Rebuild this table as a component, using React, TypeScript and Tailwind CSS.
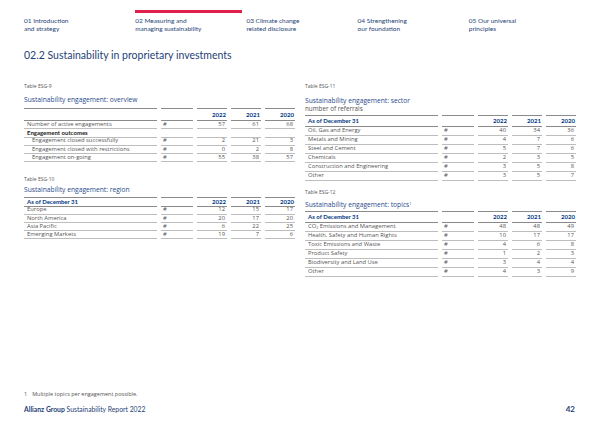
import React from 'react';

type Row = { label: React.ReactNode; indent?: boolean; bold?: boolean; vals?: string[] };

const grid = 'grid grid-cols-[133px_32px_30px_30px_30px] gap-x-[4px]';
const open = "font-['Open_Sans','Lato',sans-serif]";
const boldTxt = "font-['Lato','Open_Sans',sans-serif] font-bold text-[6px]";

function DataTable({
  head,
  headH,
  rowH,
  rows,
}: {
  head?: string;
  headH: string;
  rowH: string;
  rows: Row[];
}) {
  const hcell = `border-t border-b border-[#8a8a8a] ${headH} flex items-center ${boldTxt} text-[#003781]`;
  return (
    <div className="leading-none">
      <div className={grid}>
        <div className={`${hcell} pl-[3px]`}>{head}</div>
        <div className={hcell}></div>
        {['2022', '2021', '2020'].map(y => (
          <div key={y} className={`${hcell} justify-end pr-[1px]`}>{y}</div>
        ))}
      </div>
      {rows.map((r, i) => {
        const cell = `border-b border-[#bdbdbd] ${rowH} flex items-center text-[#555] ${open} text-[5.8px]`;
        return (
          <div key={i} className={grid}>
            <div className={`${cell} whitespace-nowrap ${r.indent ? 'pl-[8px]' : 'pl-[3px]'}`}>
              {r.bold ? <span className={`${boldTxt} text-[#222]`}>{r.label}</span> : r.label}
            </div>
            <div className={`${cell} pl-[2px]`}>{r.vals ? '#' : ''}</div>
            {[0, 1, 2].map(k => (
              <div key={k} className={`${cell} justify-end pr-[2px]`}>{r.vals ? r.vals[k] : ''}</div>
            ))}
          </div>
        );
      })}
    </div>
  );
}

const navItems = [
  ['01 Introduction', 'and strategy'],
  ['02 Measuring and', 'managing sustainability'],
  ['03 Climate change', 'related disclosure'],
  ['04 Strengthening', 'our foundation'],
  ['05 Our universal', 'principles'],
];

const caption = `${open} text-[5px] leading-[8px] text-[#555]`;
const title = `${open} text-[6.7px] leading-[9px] text-[#1f4a8c]`;

export default function App() {
  return (
    <div className="w-[600px] h-[424px] overflow-hidden bg-white px-[24px] flex flex-col font-['Lato','Open_Sans',sans-serif]">
      {/* chapter nav */}
      <div className="grid grid-cols-5 gap-x-[4px] pt-[10px]">
        {navItems.map((n, i) => (
          <div key={i}>
            <div className={`h-[3px] ${i === 1 ? 'bg-[#e0204a]' : ''}`}></div>
            <div className="mt-[4px] text-[6.5px] leading-[8px] text-[#1f3f78]">
              {n[0]}
              <br />
              {n[1]}
            </div>
          </div>
        ))}
      </div>

      <h1 className="mt-[16px] text-[10.5px] leading-[12px] text-[#1f3f78]">02.2 Sustainability in proprietary investments</h1>

      <div className="grid grid-cols-[270px_270px] gap-x-[11px] mt-[21px]">
        {/* left column */}
        <div>
          <div className={caption}>Table ESG-9</div>
          <div className={`mt-[5px] ${title}`}>Sustainability engagement: overview</div>
          <div className="mt-[4px]">
            <DataTable
              headH="h-[13px]"
              rowH="h-[8.3px]"
              rows={[
                { label: 'Number of active engagements', vals: ['57', '61', '68'] },
                { label: 'Engagement outcomes', bold: true },
                { label: 'Engagement closed successfully', indent: true, vals: ['2', '21', '3'] },
                { label: 'Engagement closed with restrictions', indent: true, vals: ['0', '2', '8'] },
                { label: 'Engagement on-going', indent: true, vals: ['55', '38', '57'] },
              ]}
            />
          </div>

          <div className={`mt-[12.5px] ${caption}`}>Table ESG-10</div>
          <div className={`mt-[2px] ${title}`}>Sustainability engagement: region</div>
          <div className="mt-[2.7px]">
            <DataTable
              head="As of December 31"
              headH="h-[10px]"
              rowH="h-[8.2px]"
              rows={[
                { label: 'Europe', vals: ['12', '15', '17'] },
                { label: 'North America', vals: ['20', '17', '20'] },
                { label: 'Asia Pacific', vals: ['6', '22', '25'] },
                { label: 'Emerging Markets', vals: ['19', '7', '6'] },
              ]}
            />
          </div>
        </div>

        {/* right column */}
        <div>
          <div className={caption}>Table ESG-11</div>
          <div className={`mt-[6px] ${title}`}>Sustainability engagement: sector</div>
          <div className={`${open} -mt-[0.5px] text-[6.3px] leading-[8.5px] text-[#555]`}>number of referrals</div>
          <div className="mt-[1.8px]">
            <DataTable
              head="As of December 31"
              headH="h-[12.4px]"
              rowH="h-[8.9px]"
              rows={[
                { label: 'Oil, Gas and Energy', vals: ['40', '34', '36'] },
                { label: 'Metals and Mining', vals: ['4', '7', '6'] },
                { label: 'Steel and Cement', vals: ['5', '7', '6'] },
                { label: 'Chemicals', vals: ['2', '3', '5'] },
                { label: 'Construction and Engineering', vals: ['3', '5', '8'] },
                { label: 'Other', vals: ['3', '5', '7'] },
              ]}
            />
          </div>

          <div className={`mt-[7px] ${caption}`}>Table ESG-12</div>
          <div className={`mt-[4.5px] ${title}`}>
            Sustainability engagement: topics<sup className="text-[3.5px]">1</sup>
          </div>
          <div className="mt-[2px]">
            <DataTable
              head="As of December 31"
              headH="h-[12.3px]"
              rowH="h-[9px]"
              rows={[
                { label: <span>CO<sub className="text-[3.5px]">2</sub> Emissions and Management</span>, vals: ['48', '48', '49'] },
                { label: 'Health, Safety and Human Rights', vals: ['10', '17', '17'] },
                { label: 'Toxic Emissions and Waste', vals: ['4', '6', '8'] },
                { label: 'Product Safety', vals: ['1', '2', '3'] },
                { label: 'Biodiversity and Land Use', vals: ['3', '4', '4'] },
                { label: 'Other', vals: ['4', '3', '9'] },
              ]}
            />
          </div>
        </div>
      </div>

      <div className={`mt-auto ${open} text-[5.5px] leading-[8px] text-[#555]`}>
        <span className="mr-[5px]">1</span>Multiple topics per engagement possible.
      </div>
      <div className="mt-[7px] mb-[11px] flex items-center justify-between text-[6.8px] leading-[8px] text-[#1f3f78]">
        <span>
          <span className="font-bold">Allianz Group</span> Sustainability Report 2022
        </span>
        <span className="mr-[1px] text-[8px] font-bold">42</span>
      </div>
    </div>
  );
}
